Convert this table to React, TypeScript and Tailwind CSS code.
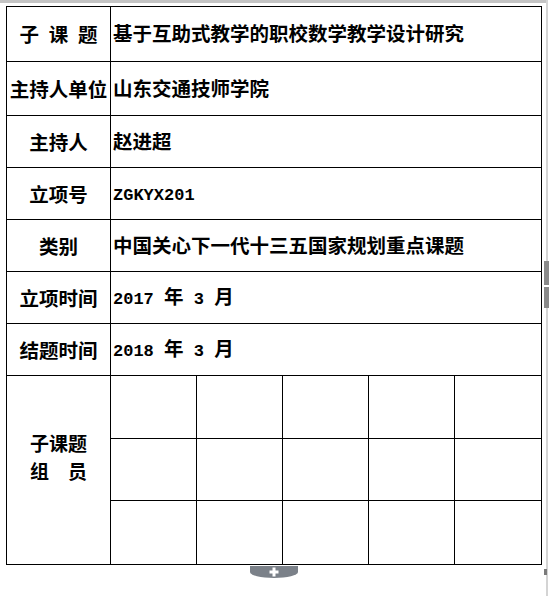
import React from 'react';

const latin = "font-['Liberation_Mono',monospace] text-[17px] font-bold";

const rows = [
  { label: '子\u2002课\u2002题', value: '基于互助式教学的职校数学教学设计研究', h: 'h-[55px]' },
  { label: '主持人单位', value: '山东交通技师学院', h: 'h-[54px]' },
  { label: '主持人', value: '赵进超', h: 'h-[52px]' },
  { label: '立项号', value: <span className={latin}>ZGKYX201</span>, h: 'h-[52px]' },
  { label: '类别', value: '中国关心下一代十三五国家规划重点课题', h: 'h-[52px]' },
  {
    label: '立项时间',
    value: (
      <>
        <span className={latin}>2017 </span>年<span className={latin}> 3 </span>月
      </>
    ),
    h: 'h-[52px]',
  },
  {
    label: '结题时间',
    value: (
      <>
        <span className={latin}>2018 </span>年<span className={latin}> 3 </span>月
      </>
    ),
    h: 'h-[52px]',
  },
];

const memberRows = ['h-[63px]', 'h-[62px]', 'h-[64px]'];

export default function App() {
  return (
    <div className="relative w-[549px] h-[596px] bg-white overflow-hidden font-['Noto_Sans_CJK_SC',sans-serif] font-bold text-black">
      {/* window chrome */}
      <div className="absolute top-0 left-0 w-[548px] h-[3px] bg-[#c4c4c4]" />
      <div className="absolute top-0 right-[1px] w-[2px] h-full bg-[#d4d4d4]" />
      <div className="absolute top-[261px] right-0 w-[5px] h-[47px] bg-[#8a8a8a]">
        <div className="mt-[24px] h-[2px] w-full bg-white" />
      </div>
      <div className="absolute top-[569px] right-[2px] w-[3px] h-[6px] bg-[#7a7a7a]" />

      <div className="pt-[6px] pl-[6px]">
        <table className="table-fixed border-collapse w-[535px]">
          <colgroup>
            <col className="w-[104px]" />
            <col className="w-[86px]" />
            <col className="w-[86px]" />
            <col className="w-[86px]" />
            <col className="w-[86px]" />
            <col className="w-[87px]" />
          </colgroup>
          <tbody>
            {rows.map((r, i) => (
              <tr key={i} className={r.h}>
                <td className="border-[1.5px] border-black text-center text-[19.5px] leading-none p-0 whitespace-nowrap">
                  {r.label}
                </td>
                <td colSpan={5} className="border-[1.5px] border-black text-left text-[19.5px] leading-none pl-[2px] pb-[2px] whitespace-nowrap">
                  {r.value}
                </td>
              </tr>
            ))}
            {memberRows.map((h, i) => (
              <tr key={'m' + i} className={h}>
                {i === 0 && (
                  <td rowSpan={3} className="border-[1.5px] border-black text-center text-[19px] leading-[28px] p-0 pb-[26px]">
                    <div>子课题</div>
                    <div>组　员</div>
                  </td>
                )}
                {[0, 1, 2, 3, 4].map((c) => (
                  <td key={c} className="border-[1.5px] border-black" />
                ))}
              </tr>
            ))}
          </tbody>
        </table>
      </div>

      {/* add-row tab */}
      <div className="absolute left-[250px] top-[566px] w-[48px] h-[12px] bg-[#7b8189] rounded-b-[24px_6px] flex items-center justify-center">
        <svg width="10" height="10" viewBox="0 0 10 10">
          <rect x="3.5" y="0.5" width="3" height="9" fill="#fff" />
          <rect x="0.5" y="3.5" width="9" height="3" fill="#fff" />
        </svg>
      </div>
    </div>
  );
}
